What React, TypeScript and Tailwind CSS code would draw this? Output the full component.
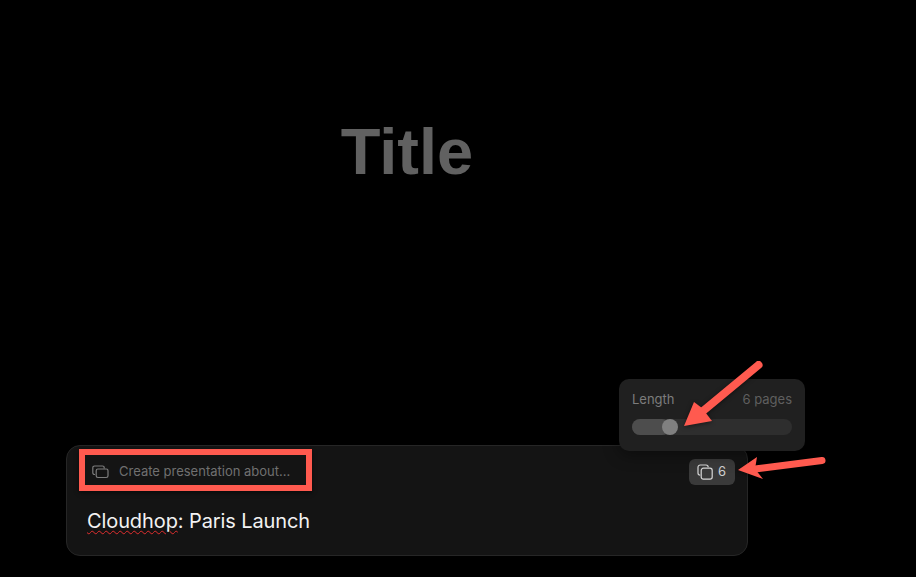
export default function App() {
  return (
    <div className="relative flex h-[577px] w-[916px] flex-col overflow-hidden bg-black font-['Inter',sans-serif]">
      <div className="ml-[66px] flex w-[682px] flex-col">
        <h1 className="mt-[115px] text-center font-['Liberation_Sans',sans-serif] text-[65px] leading-[74px] font-bold text-[#616161]">
          Title
        </h1>

        <div className="mt-[256px] flex h-[111px] w-[682px] flex-col rounded-[14px] border border-[#262626] bg-[#141414] pt-[5px] pl-[20px]">
          <div className="flex h-[41px] items-center pr-[12px]">
            <div className="flex items-center gap-[10px] pl-[5px]">
              <svg width="17" height="14" viewBox="0 0 17 14" fill="none" stroke="#7c7c7c" strokeWidth="1.2">
                <path d="M3 9.5H2.5A1.7 1.7 0 0 1 .8 7.8V2.7A1.7 1.7 0 0 1 2.5 1h8A1.7 1.7 0 0 1 12.2 2.7V3.5" />
                <rect x="4.2" y="4" width="11.8" height="8.5" rx="1.7" />
              </svg>
              <span className="text-[13px] text-[#707070]">Create presentation about...</span>
            </div>
            <div className="ml-auto flex h-[26px] w-[46px] items-center justify-center gap-[5px] rounded-[6px] bg-[#3a3a3a] pr-[1px] text-[13px] text-[#d0d0d0]">
              <svg width="16" height="16" viewBox="0 0 16 16" fill="none" stroke="#d8d8d8" strokeWidth="1.2">
                <path d="M3.2 11.2A2.2 2.2 0 0 1 1 9V3.2A2.2 2.2 0 0 1 3.2 1H9a2.2 2.2 0 0 1 2.2 2.2" />
                <rect x="4.2" y="4.2" width="11" height="11" rx="2.2" />
              </svg>
              <span>6</span>
            </div>
          </div>
          <p className="mt-[15px] text-[20px] leading-[28px] tracking-[-0.1px] text-[#f2f2f2]">
            <span className="underline decoration-[#e02e2e] decoration-wavy decoration-1 underline-offset-[2px]">Cloudhop</span>
            : Paris Launch
          </p>
        </div>
      </div>

      {/* Length popover */}
      <div className="absolute top-[379px] left-[619px] flex h-[72px] w-[186px] flex-col rounded-[10px] bg-[#202020] px-[13px] pt-[12px] shadow-[0_4px_16px_rgba(0,0,0,0.4)]">
        <div className="flex items-center justify-between text-[13px] leading-[16px]">
          <span className="text-[#7c7c7c]">Length</span>
          <span className="text-[#5f5f5f]">6 pages</span>
        </div>
        <div className="relative mt-[12px] h-[16px] w-[160px] rounded-full bg-[#2e2e2e]">
          <div className="h-[16px] w-[38px] rounded-full bg-[#4d4d4d]" />
          <div className="absolute top-0 left-[30px] h-[16px] w-[16px] rounded-full bg-[#808080]" />
        </div>
      </div>

      {/* Annotations */}
      <div className="absolute top-[449px] left-[79px] h-[42px] w-[233px] border-[6px] border-[#ff5a4f] shadow-[0_2px_4px_rgba(0,0,0,0.5)]" />
      <svg className="absolute top-0 left-0 drop-shadow-[0_1px_2px_rgba(0,0,0,0.5)]" width="916" height="577" viewBox="0 0 916 577" fill="#ff5a4f">
        <path d="M758.5 365 L703 411" stroke="#ff5a4f" strokeWidth="8" strokeLinecap="round" fill="none" />
        <path d="M684 426 L694 402 L702 408 L712 421 Z" />
        <path d="M822 460.5 L755 469" stroke="#ff5a4f" strokeWidth="7" strokeLinecap="round" fill="none" />
        <path d="M738 470 L757 457 L755 469 L763 479 Z" />
      </svg>
    </div>
  );
}
